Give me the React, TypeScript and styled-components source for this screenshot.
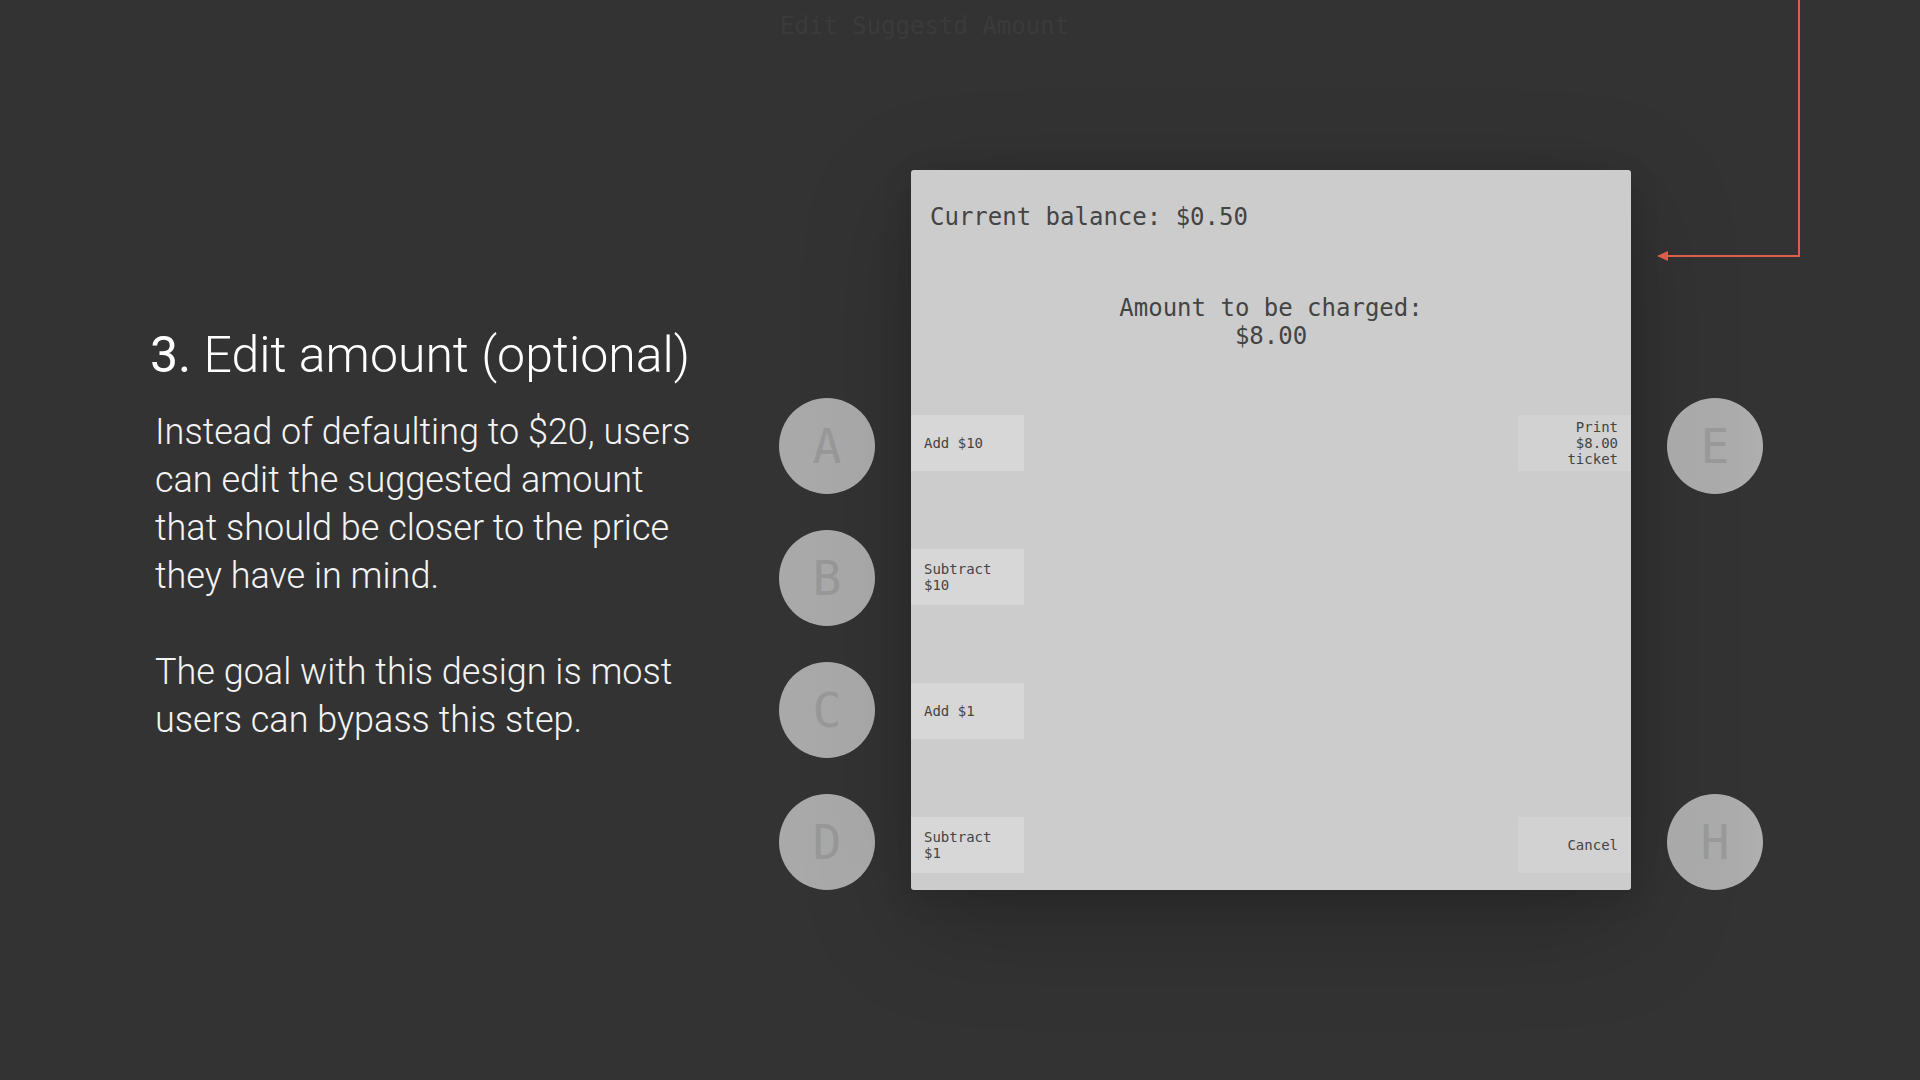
import React from "react";
import styled, { createGlobalStyle } from "styled-components";

const GlobalStyle = createGlobalStyle`
  html, body {
    margin: 0;
    padding: 0;
    background: #333333;
  }
  body {
    width: 1920px;
    height: 1080px;
    overflow: hidden;
  }
`;

const Page = styled.div`
  position: relative;
  width: 1920px;
  height: 1080px;
  background: #333333;
  box-sizing: border-box;
  padding-top: 12px;
`;

const ScreenTitle = styled.div`
  padding-left: 780px;
  height: 28px;
  font-family: "DejaVu Sans Mono", monospace;
  font-size: 24px;
  line-height: 28px;
  color: #3b3b3b;
  white-space: pre;
`;

const Main = styled.div`
  display: flex;
  align-items: flex-start;
  margin-top: 130px;
`;

const Intro = styled.section`
  width: 779px;
  box-sizing: border-box;
  padding-left: 150px;
  margin-top: 157px;
  font-family: Roboto, "Noto Sans", sans-serif;
  color: #ffffff;
`;

const Heading = styled.h1`
  margin: 0;
  font-size: 50px;
  line-height: 56px;
  font-weight: 300;
  letter-spacing: 0;
  white-space: nowrap;
`;

const StepNo = styled.span`
  font-weight: 400;
`;

const Para = styled.p`
  margin: 25px 0 0;
  padding-left: 5px;
  font-size: 36px;
  line-height: 48px;
  font-weight: 300;
  color: #f4f4f4;
  white-space: nowrap;

  & + & {
    margin-top: 48px;
  }
`;

const Device = styled.div`
  display: grid;
  grid-template-columns: 96px 720px 96px;
  column-gap: 36px;
`;

const CircleCol = styled.div<{ $right?: boolean }>`
  display: flex;
  flex-direction: column;
  height: 720px;
  box-sizing: border-box;
  padding-top: 228px;
  gap: 36px;
  justify-content: ${(p) => (p.$right ? "space-between" : "flex-start")};
`;

const Circle = styled.div`
  width: 96px;
  height: 96px;
  border-radius: 50%;
  background: linear-gradient(90deg, #a9a9a9 0%, #aaaaaa 55%, #afafaf 100%);
  display: flex;
  align-items: center;
  justify-content: center;
  font-family: "DejaVu Sans Mono", monospace;
  font-size: 48px;
  line-height: 1;
  color: #999999;
  flex: none;
`;

const Panel = styled.div`
  width: 720px;
  height: 720px;
  box-sizing: border-box;
  background: #cccccc;
  border-radius: 3px;
  box-shadow: 0 30px 110px rgba(0, 0, 0, 0.22), 0 6px 30px rgba(0, 0, 0, 0.12);
  display: flex;
  flex-direction: column;
  font-family: "DejaVu Sans Mono", monospace;
  color: #444444;
`;

const Balance = styled.div`
  margin-top: 33px;
  padding-left: 19px;
  font-size: 24px;
  line-height: 28px;
`;

const Charge = styled.div`
  margin-top: 63px;
  text-align: center;
  font-size: 24px;
  line-height: 28px;
`;

const Keys = styled.div`
  margin-top: 65px;
  display: flex;
  justify-content: space-between;
  height: 458px;
`;

const KeyCol = styled.div<{ $right?: boolean }>`
  display: flex;
  flex-direction: column;
  gap: 78px;
  justify-content: ${(p) => (p.$right ? "space-between" : "flex-start")};
`;

const Key = styled.div<{ $right?: boolean }>`
  width: 113px;
  height: 56px;
  box-sizing: border-box;
  padding: 0 13px;
  display: flex;
  align-items: center;
  justify-content: ${(p) => (p.$right ? "flex-end" : "flex-start")};
  text-align: ${(p) => (p.$right ? "right" : "left")};
  background: ${(p) => (p.$right ? "#d2d2d2" : "#d7d7d7")};
  font-size: 14px;
  line-height: 16px;
  color: #444444;
`;

const Arrow = styled.svg`
  position: absolute;
  left: 0;
  top: 0;
  pointer-events: none;
`;

export default function App() {
  return (
    <>
      <GlobalStyle />
      <Page>
        <ScreenTitle>Edit Suggestd Amount</ScreenTitle>
        <Main>
          <Intro>
            <Heading>
              <StepNo>3.</StepNo> Edit amount (optional)
            </Heading>
            <Para>
              Instead of defaulting to $20, users
              <br />
              can edit the suggested amount
              <br />
              that should be closer to the price
              <br />
              they have in mind.
            </Para>
            <Para>
              The goal with this design is most
              <br />
              users can bypass this step.
            </Para>
          </Intro>
          <Device>
            <CircleCol>
              <Circle>A</Circle>
              <Circle>B</Circle>
              <Circle>C</Circle>
              <Circle>D</Circle>
            </CircleCol>
            <Panel>
              <Balance>Current balance: $0.50</Balance>
              <Charge>
                Amount to be charged:
                <br />
                $8.00
              </Charge>
              <Keys>
                <KeyCol>
                  <Key>Add $10</Key>
                  <Key>
                    Subtract
                    <br />
                    $10
                  </Key>
                  <Key>Add $1</Key>
                  <Key>
                    Subtract
                    <br />
                    $1
                  </Key>
                </KeyCol>
                <KeyCol $right>
                  <Key $right>
                    Print
                    <br />
                    $8.00
                    <br />
                    ticket
                  </Key>
                  <Key $right>Cancel</Key>
                </KeyCol>
              </Keys>
            </Panel>
            <CircleCol $right>
              <Circle>E</Circle>
              <Circle>H</Circle>
            </CircleCol>
          </Device>
        </Main>
        <Arrow width="1920" height="1080" viewBox="0 0 1920 1080">
          <polyline
            points="1799,0 1799,256 1666,256"
            fill="none"
            stroke="#d9614c"
            strokeWidth="2"
          />
          <polygon points="1657,256 1668,251 1668,261" fill="#d9614c" />
        </Arrow>
      </Page>
    </>
  );
}
